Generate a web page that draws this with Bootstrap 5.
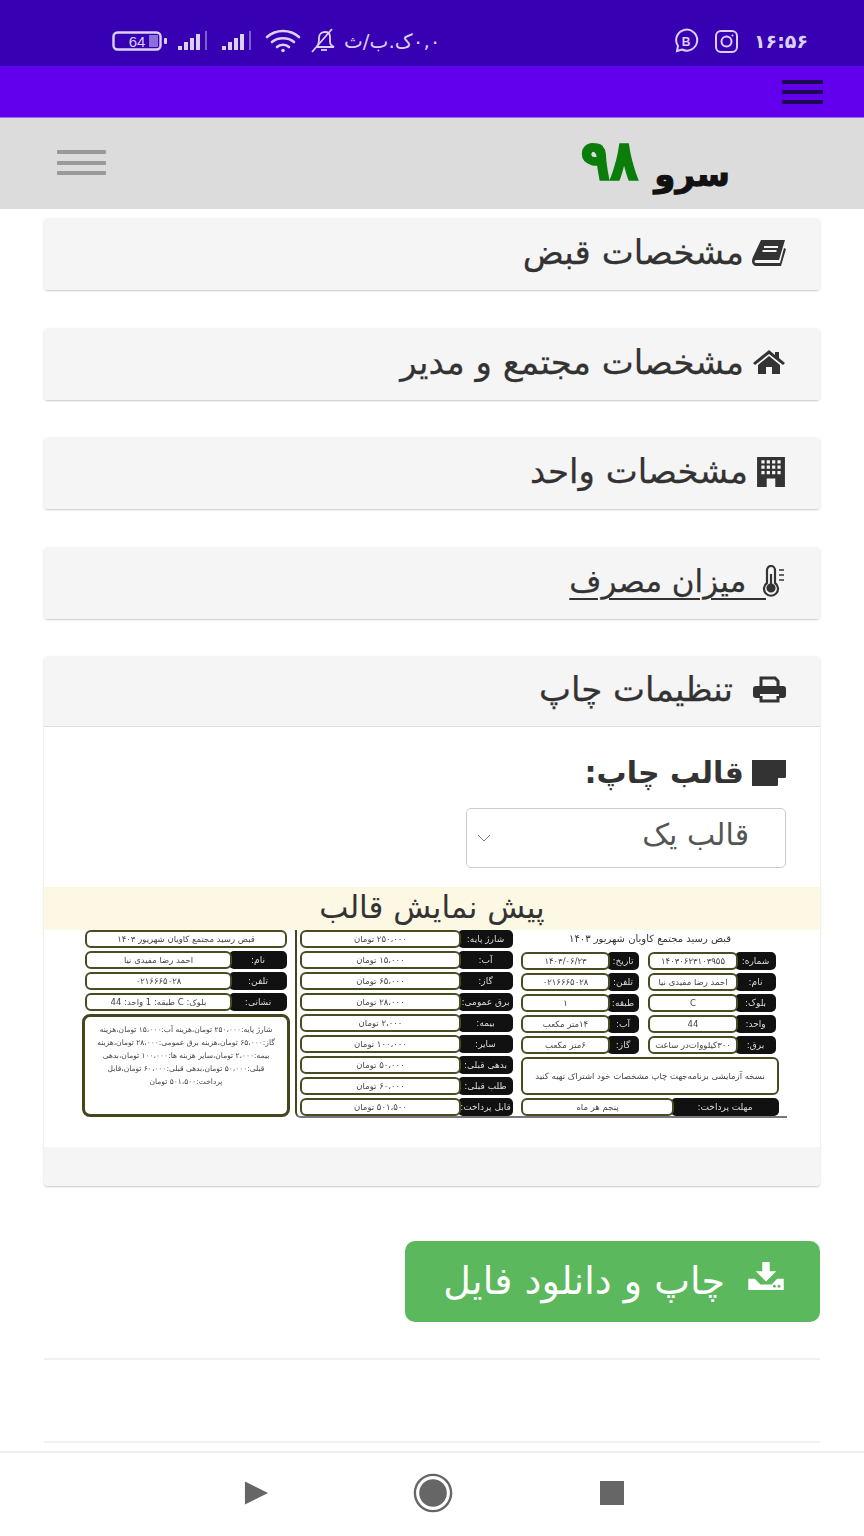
<!DOCTYPE html>
<html lang="fa" dir="rtl">
<head>
<meta charset="utf-8">
<title>سرو ۹۸</title>
<link rel="stylesheet" href="https://cdn.jsdelivr.net/npm/bootstrap@5.3.0/dist/css/bootstrap.min.css">
<style>
html,body{height:100%}
body{font-family:"DejaVu Sans",sans-serif;color:#333;background:#fff;overflow:hidden}
.sbar{height:66px;background:#3700b3;color:#dcd0f5;padding:16px 56px 0 112px;font-size:20px}
.sbar svg{display:block}
.speed{font-size:20px;margin-left:-1px;white-space:nowrap}
.clock{font-size:19px;font-weight:700}
.pbar{height:52px;background:#6200ee;padding:0 41px;border-bottom:1px solid #9a6cf0}
.burger{display:flex;flex-direction:column;justify-content:space-between}
.burger i{display:block;height:3px;border-radius:1px}
.burger-d{width:41px;height:24px}
.burger-d i{background:#1d0a55;height:4px}
.burger-g{width:49px;height:25px;margin-bottom:2px}
.burger-g i{background:#999;height:4px}
.topnav{height:91px;background:#dcdcdc;padding:0 134px 0 57px}
.logo{font-size:34px;font-weight:700;color:#111;line-height:1;margin-top:12px;white-space:nowrap;letter-spacing:-1px;-webkit-text-stroke:1px #111;word-spacing:4px}
.logo b{display:inline-block;color:#0a7d0a;-webkit-text-stroke:1.4px #0a7d0a;font-size:47px;transform:translateY(-9px) scaleY(1.2)}
.mainw{padding:9px 44px 0}
.acc{margin-bottom:37.5px;border:0;border-radius:4px;box-shadow:0 1px 2px rgba(0,0,0,.22)}
.acc>.card-header{height:72px;padding:0 34px 3px;background:#f5f5f5;border-bottom:0;font-size:34px;color:#333;display:flex;align-items:center;gap:8px;white-space:nowrap;-webkit-text-stroke:.25px #333}
.acc>.card-header svg{flex:none}
.acc .lnk{color:#333;font-size:31px;text-decoration:underline;text-decoration-thickness:2px;text-underline-offset:6px;margin-right:-14px}
.acc>.open{border-bottom:1px solid #ddd;gap:20px;height:71px}
.tpl{padding:28px 34px 0;font-size:30px;font-weight:700;color:#333;line-height:36px;gap:8px}
.tplsel{width:320px;height:60px;margin:17px 34px 19px 0;font-size:30px;color:#555;padding:0 36px 8px 36px;background-image:url("data:image/svg+xml,%3csvg xmlns='http://www.w3.org/2000/svg' viewBox='0 0 16 16'%3e%3cpath fill='none' stroke='%23777' stroke-width='1' d='M2 5l6 6 6-6'/%3e%3c/svg%3e");background-position:left 6px center;background-size:22px 16px;border-color:#ccc;border-radius:5px;font-family:"DejaVu Sans",sans-serif}
.tplhead{height:43px;background:#fcf8e3;text-align:center;font-size:31px;line-height:40px;color:#333;white-space:nowrap}
.pvw{height:217px;padding:0 33px 0 37px;gap:5px;filter:blur(.55px);will-change:transform;font-size:8.5px;color:#444;line-height:1}
.pa{width:208px;height:187px;gap:3px}
.pa>.rr,.pa>.tbx{margin:0 3px}
.pbc{width:492px;height:188px;border-left:2px solid #45451e;border-bottom:2px solid #777;border-radius:0 0 0 6px;padding:0 8px 0 3px;gap:5px}
.pc{width:258px;gap:3px}
.pb{width:216px;gap:3px;margin-right:3px}
.rr{display:flex;height:18px;flex:none}
.rl{background:#111;color:#ddd;border-radius:5px;display:flex;align-items:center;justify-content:center;font-size:9px;white-space:nowrap;overflow:hidden;flex:none}
.rv{flex:1;min-width:0;background:#fff;border:2px solid #4b4b22;border-radius:6px;display:flex;align-items:center;justify-content:center;white-space:nowrap;overflow:hidden;margin-right:-3px}
.w57{width:58px}.w55{width:55px}.w40{width:41px}.w30{width:32px}.w107{width:108px}
.pr1{width:128px;margin-right:3px}.pr2{width:118px;margin-right:9px}
.ttl{height:18px;font-size:10px;color:#333;text-align:center;line-height:18px;margin-bottom:-1px}
.tbx{height:18px;flex:none;border:2px solid #4b4b22;border-radius:6px;display:flex;align-items:center;justify-content:center;font-size:8.5px;background:#fff}
.big{flex:1;border:3px solid #45451e;border-radius:8px;padding:6px 5px;text-align:center;line-height:13px;font-size:7.5px;background:#fff}
.note{height:38px;flex:none;border:2px solid #4b4b22;border-radius:6px;display:flex;align-items:center;justify-content:center;font-size:8.5px;background:#fff}
.cfoot{height:39px;background:#f5f5f5;border-top:0}
.dlb{width:415px;height:81px;margin-top:17px;background:#5cb85c;border:0;border-radius:10px;color:#fff;font-size:38px;padding:0 35px;display:flex;align-items:center;gap:22px;letter-spacing:1px;white-space:nowrap;margin-left:auto;--bs-btn-hover-bg:#5cb85c;--bs-btn-hover-color:#fff}
.dlb svg{flex:none;margin-bottom:12px}
.sep{border:0;border-top:2px solid #f2f2f2;opacity:1;margin:0}
.sep1{margin-top:36px}.sep2{margin-top:81px}
.navb{position:fixed;left:0;right:0;bottom:0;height:85px;background:#fff;border-top:2px solid #eee;direction:ltr;padding:0 240px 4px 244px}
</style>
</head>
<body>
<div class="sbar d-flex align-items-center justify-content-between" dir="ltr">
  <div class="d-flex align-items-center gap-2">
    <svg width="57" height="22" viewBox="0 0 57 22"><rect x="1.5" y="2.5" width="47" height="17" rx="4" fill="none" stroke="#dcd0f5" stroke-width="2.4"/><rect x="37" y="5" width="9" height="12" fill="#8a70d8"/><rect x="52" y="8" width="3" height="6" rx="1" fill="#dcd0f5"/><text x="25" y="17" text-anchor="middle" font-size="15" font-family="Liberation Sans" fill="#dcd0f5">64</text></svg>
    <svg width="36" height="22" viewBox="0 0 36 22"><g fill="#dcd0f5"><rect x="1" y="16" width="4" height="4"/><rect x="7" y="12" width="4" height="8"/><rect x="13" y="8" width="4" height="12"/><rect x="19" y="4" width="4" height="16"/></g><rect x="28" y="1" width="2" height="19" fill="#7a60c8"/></svg>
    <svg width="36" height="22" viewBox="0 0 36 22"><g fill="#dcd0f5"><rect x="1" y="16" width="4" height="4"/><rect x="7" y="12" width="4" height="8"/><rect x="13" y="8" width="4" height="12"/><rect x="19" y="4" width="4" height="16"/></g><rect x="28" y="1" width="2" height="19" fill="#7a60c8"/></svg>
    <svg width="36" height="24" viewBox="0 0 36 24" fill="none" stroke="#dcd0f5" stroke-width="2.6" stroke-linecap="round"><path d="M2 8c9-8 23-8 32 0"/><path d="M7 13c6-5 16-5 22 0"/><path d="M12 18c3-3 9-3 12 0"/><circle cx="18" cy="21.500" r="1.800" fill="#dcd0f5" stroke="none"/></svg>
    <svg width="28" height="26" viewBox="0 0 28 26" fill="none" stroke="#dcd0f5" stroke-width="1.800"><path d="M8 19c2-3 2-6 2-9 0-4 3-6 6-6s5 2 5 5v5c0 2 2 4 4 5z"/><path d="M12 22h6"/><path d="M3 24 23 1"/></svg>
    <span class="speed" dir="rtl">۰,۰ک.ب/ث</span>
  </div>
  <div class="d-flex align-items-center" style="gap:15px">
    <svg width="26" height="26" viewBox="0 0 26 26" fill="none" stroke="#dcd0f5" stroke-width="2"><path d="M4 23l1-5a10.500 10.500 0 1 1 4 3.500z"/><text x="13" y="18" text-anchor="middle" font-size="12" font-family="Liberation Sans" fill="#dcd0f5" stroke="none" font-weight="700">B</text></svg>
    <svg width="25" height="25" viewBox="0 0 25 25" fill="none" stroke="#dcd0f5" stroke-width="2"><rect x="2" y="2" width="21" height="21" rx="5"/><circle cx="12.500" cy="12.500" r="5"/><circle cx="18.500" cy="6.500" r="1" fill="#dcd0f5" stroke="none"/></svg>
    <span class="clock" dir="ltr">۱۶:۵۶</span>
  </div>
</div>
<div class="pbar d-flex align-items-center">
  <div class="burger burger-d"><i></i><i></i><i></i></div>
</div>
<nav class="navbar topnav d-flex align-items-center justify-content-between flex-nowrap">
  <div class="logo">سرو <b>۹۸</b></div>
  <div class="burger burger-g"><i></i><i></i><i></i></div>
</nav>
<main class="mainw">
  <div class="card acc"><div class="card-header">
    <svg width="34" height="28" viewBox="0 0 34 28" fill="#333"><path d="M9 1h24l-6 20H4c-2 0-2 3 0 3h24l4-15 2 1-5 17H5C0 27-1 22 1 18z"/><path d="M12 7h14v2H12zM10.500 11h14v2h-14z" fill="#f5f5f5"/></svg>
    <span>مشخصات قبض</span>
  </div></div>
  <div class="card acc"><div class="card-header">
    <svg width="34" height="26" viewBox="0 0 34 26" fill="#333"><path d="M17 1 1 14l2 2L17 5l14 11 2-2-6-5V3h-4v3z"/><path d="M6 16 17 7l11 9v9h-8v-7h-6v7H6z"/></svg>
    <span>مشخصات مجتمع و مدیر</span>
  </div></div>
  <div class="card acc"><div class="card-header">
    <svg width="30" height="30" viewBox="0 0 28 28"><rect x="1" y="0" width="26" height="28" fill="#333"/><g fill="#f5f5f5"><path d="M5 3h3v3H5zM10 3h3v3h-3zM15 3h3v3h-3zM20 3h3v3h-3zM5 8h3v3H5zM10 8h3v3h-3zM15 8h3v3h-3zM20 8h3v3h-3zM5 13h3v3H5zM10 13h3v3h-3zM15 13h3v3h-3zM20 13h3v3h-3zM10 20h8v8h-8z"/></g></svg>
    <span>مشخصات واحد</span>
  </div></div>
  <div class="card acc"><div class="card-header">
    <svg width="26" height="32" viewBox="0 0 26 32" fill="none" stroke="#333" stroke-width="2.200"><path d="M7 18V5a4 4 0 0 1 8 0v13a7 7 0 1 1-8 0z"/><circle cx="11" cy="23" r="3.500" fill="#333"/><path d="M11 23V9"/><path d="M19 5h5M19 10h5M19 15h5" stroke-width="1.500"/></svg>
    <span class="lnk">&nbsp;&nbsp;میزان مصرف</span>
  </div></div>
  <div class="card acc mb-0">
    <div class="card-header open">
      <svg width="33" height="27" viewBox="0 0 33 27"><path d="M8 11V2h14l3 3v6M8 20v5h17v-5" fill="none" stroke="#333" stroke-width="3"/><path d="M3 10h27a3 3 0 0 1 3 3v6a3 3 0 0 1-3 3h-4v-4H7v4H3a3 3 0 0 1-3-3v-6a3 3 0 0 1 3-3z" fill="#333"/></svg>
      <span>تنظیمات چاپ</span>
    </div>
    <div class="card-body p-0 bg-white">
      <div class="tpl d-flex align-items-center">
        <svg width="34" height="26" viewBox="0 0 34 26"><path d="M0 0h34v17l-9 9H0z" fill="#333"/><path d="M26 26v-8h8z" fill="#fff"/></svg>
        <span>قالب چاپ:</span>
      </div>
      <select class="form-select tplsel"><option>قالب یک</option></select>
      <div class="tplhead">پیش نمایش قالب</div>
      <div class="pvw d-flex">
        <div class="pbc d-flex">
          <div class="pc d-flex flex-column">
            <div class="ttl">قبض رسید مجتمع کاویان شهریور ۱۴۰۳</div>
            <div class="rr" style="margin-top:2px"><div class="d-flex pr1"><div class="rl w40">شماره:</div><div class="rv">۱۴۰۳۰۶۲۳۱۰۳۹۵۵</div></div><div class="d-flex pr2"><div class="rl w30">تاریخ:</div><div class="rv">۱۴۰۳/۰۶/۲۳</div></div></div>
            <div class="rr"><div class="d-flex pr1"><div class="rl w40">نام:</div><div class="rv">احمد رضا مفیدی نیا</div></div><div class="d-flex pr2"><div class="rl w30">تلفن:</div><div class="rv">۰۲۱۶۶۶۵۰۲۸</div></div></div>
            <div class="rr"><div class="d-flex pr1"><div class="rl w40">بلوک:</div><div class="rv">C</div></div><div class="d-flex pr2"><div class="rl w30">طبقه:</div><div class="rv">۱</div></div></div>
            <div class="rr"><div class="d-flex pr1"><div class="rl w40">واحد:</div><div class="rv">44</div></div><div class="d-flex pr2"><div class="rl w30">آب:</div><div class="rv">۱۴متر مکعب</div></div></div>
            <div class="rr"><div class="d-flex pr1"><div class="rl w40">برق:</div><div class="rv">۳۰۰کیلووات‌در ساعت</div></div><div class="d-flex pr2"><div class="rl w30">گاز:</div><div class="rv">۶متر مکعب</div></div></div>
            <div class="note">نسخه آزمایشی برنامه‌جهت چاپ مشخصات خود اشتراک تهیه کنید</div>
            <div class="rr"><div class="rl w107">مهلت پرداخت:</div><div class="rv">پنجم هر ماه</div></div>
          </div>
          <div class="pb d-flex flex-column">
            <div class="rr"><div class="rl w55">شارژ پایه:</div><div class="rv">۲۵۰،۰۰۰ تومان</div></div>
            <div class="rr"><div class="rl w55">آب:</div><div class="rv">۱۵،۰۰۰ تومان</div></div>
            <div class="rr"><div class="rl w55">گاز:</div><div class="rv">۶۵،۰۰۰ تومان</div></div>
            <div class="rr"><div class="rl w55">برق عمومی:</div><div class="rv">۲۸،۰۰۰ تومان</div></div>
            <div class="rr"><div class="rl w55">بیمه:</div><div class="rv">۲،۰۰۰ تومان</div></div>
            <div class="rr"><div class="rl w55">سایر:</div><div class="rv">۱۰۰،۰۰۰ تومان</div></div>
            <div class="rr"><div class="rl w55">بدهی قبلی:</div><div class="rv">۵۰،۰۰۰ تومان</div></div>
            <div class="rr"><div class="rl w55">طلب قبلی:</div><div class="rv">۶۰،۰۰۰ تومان</div></div>
            <div class="rr"><div class="rl w55">قابل پرداخت:</div><div class="rv">۵۰۱،۵۰۰ تومان</div></div>
          </div>
        </div>
        <div class="pa d-flex flex-column">
          <div class="tbx">قبض رسید مجتمع کاویان شهریور ۱۴۰۳</div>
          <div class="rr"><div class="rl w57">نام:</div><div class="rv">احمد رضا مفیدی نیا</div></div>
          <div class="rr"><div class="rl w57">تلفن:</div><div class="rv">۰۲۱۶۶۶۵۰۲۸</div></div>
          <div class="rr"><div class="rl w57">نشانی:</div><div class="rv">بلوک: C طبقه: 1 واحد: 44</div></div>
          <div class="big">شارژ پایه:۲۵۰،۰۰۰ تومان،هزینه آب:۱۵،۰۰۰ تومان،هزینه گاز:۶۵،۰۰۰ تومان،هزینه برق عمومی:۲۸،۰۰۰ تومان،هزینه بیمه:۲،۰۰۰ تومان،سایر هزینه ها:۱۰۰،۰۰۰ تومان،بدهی قبلی:۵۰،۰۰۰ تومان،بدهی قبلی:۶۰،۰۰۰ تومان،قابل پرداخت:۵۰۱،۵۰۰ تومان</div>
        </div>
      </div>
    </div>
    <div class="card-footer cfoot"></div>
  </div>
  <div style="height:38px"></div>
  <button type="button" class="btn dlb">
    <svg width="38" height="28" viewBox="0 0 38 30" fill="#fff"><path d="M15 0h8v10h7L19 21 8 10h7z"/><path d="M0 18h7l6 6h12l6-6h7v12H0z"/><g fill="#5cb85c"><circle cx="28" cy="26" r="1.500"/><circle cx="33" cy="26" r="1.500"/></g></svg>
    <span>چاپ و دانلود فایل</span>
  </button>
  <hr class="sep sep1">
  <hr class="sep sep2">
</main>
<div class="navb d-flex align-items-center justify-content-between">
  <svg width="25" height="26" viewBox="0 0 26 26"><path d="M1 1l24 12L1 25z" fill="#666"/></svg>
  <svg width="40" height="40" viewBox="0 0 42 42" class="me-1"><circle cx="21" cy="21" r="19" fill="none" stroke="#666" stroke-width="2.500"/><circle cx="21" cy="21" r="14.500" fill="#666"/></svg>
  <svg width="24" height="24" viewBox="0 0 24 24"><rect width="24" height="24" fill="#666"/></svg>
</div>
</body>
</html>
